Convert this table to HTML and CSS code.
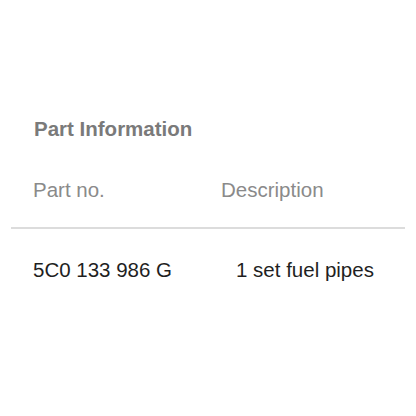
FILE: index.html
```html
<!DOCTYPE html>
<html lang="en">
<head>
    <meta charset="UTF-8">
    <meta name="viewport" content="width=device-width, initial-scale=1.0">
    <title>Part Information</title>
    <link rel="stylesheet" href="styles.css">
</head>
<body>
    <div class="panel">
        <h2 class="panel-title">Part Information</h2>
        <div class="part-head">
            <span class="col-no">Part no.</span>
            <span class="col-desc">Description</span>
        </div>
        <div class="part-row">
            <span class="col-no">5C0 133 986 G</span>
            <span class="col-desc">1 set fuel pipes</span>
        </div>
    </div>
</body>
</html>
```

FILE: styles.css
```css
* {
    box-sizing: border-box;
    margin: 0;
    padding: 0;
}

body {
    background-color: #fff;
    font-family: "Liberation Sans", Arial, sans-serif;
}

.panel {
    padding: 118px 11px 0 11px;
}

.panel-title {
    padding-left: 23px;
    font-size: 20.5px;
    font-weight: 700;
    color: #7a7a7a;
    line-height: 22px;
}

.part-head {
    display: grid;
    grid-template-columns: 188px auto;
    padding: 39px 0 0 22px;
    height: 87px;
    font-size: 20.5px;
    color: #8a8a8a;
    line-height: 22px;
}

.part-row {
    display: grid;
    grid-template-columns: 203px auto;
    padding: 30px 0 0 22px;
    border-top: 2px solid #dcdcdc;
    font-size: 20.5px;
    color: #1f1f1f;
    line-height: 22px;
}
```
